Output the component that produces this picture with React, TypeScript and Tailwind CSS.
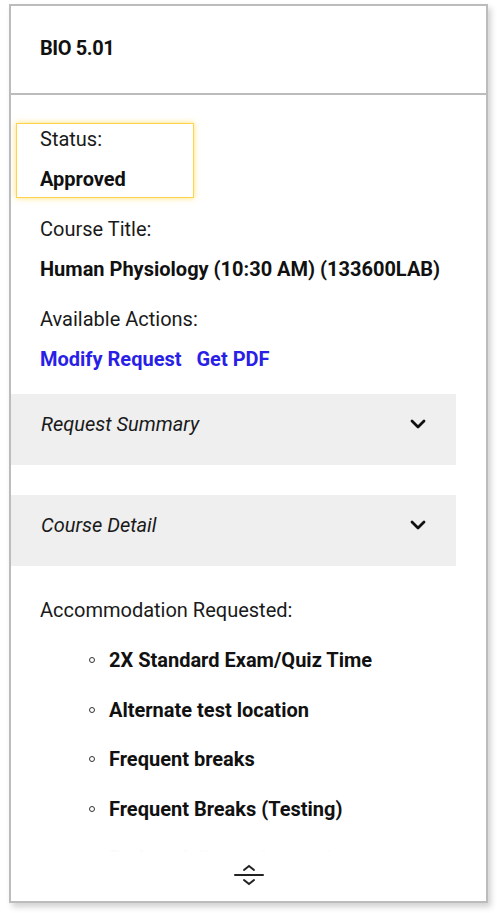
import { ChevronDown } from "lucide-react";

const accommodations = [
  "2X Standard Exam/Quiz Time",
  "Alternate test location",
  "Frequent breaks",
  "Frequent Breaks (Testing)",
  "Reduced distraction environment",
];

function Label({ children }: { children: React.ReactNode }) {
  return <div className="text-[20px] leading-[20px] text-[#1a1a1a]">{children}</div>;
}

function Value({ children }: { children: React.ReactNode }) {
  return <div className="text-[20px] leading-[20px] font-bold text-[#111]">{children}</div>;
}

function Collapsible({ title }: { title: string }) {
  return (
    <div className="mr-[30px] h-[71px] bg-[#efefef] flex items-center justify-between pl-[30px] pr-[26px] pb-[12px]">
      <span className="italic text-[20px] text-[#1a1a1a]">{title}</span>
      <ChevronDown size={24} strokeWidth={2.8} className="text-[#111]" />
    </div>
  );
}

function ExpandIcon() {
  return (
    <svg width="30" height="24" viewBox="0 0 30 24" fill="none" stroke="#222" strokeWidth="2" strokeLinecap="round">
      <path d="M10 7 L15 3 L20 7" />
      <path d="M1 12 L29 12" />
      <path d="M10 17 L15 21 L20 17" />
    </svg>
  );
}

export default function App() {
  return (
    <div className="w-[500px] h-[913px] bg-white pt-[4px] pl-[9px]" style={{ fontFamily: "Roboto, 'Liberation Sans', sans-serif" }}>
      <div className="w-[479px] h-[899px] border-2 border-[#bcbcbc] bg-white flex flex-col shadow-[3px_4px_6px_rgba(0,0,0,0.18)]">
        {/* Header */}
        <div className="h-[89px] border-b-2 border-[#bcbcbc] flex items-center pl-[29px] pb-[3px]">
          <span className="text-[20px] font-bold tracking-[-0.4px] text-[#111]">BIO 5.01</span>
        </div>

        {/* Body */}
        <div className="relative flex-1 overflow-hidden">
          <div className="pt-[28px]">
            <div className="ml-[5px] w-[178px] h-[75px] border-[1.5px] border-[#ffd44a] shadow-[0_0_6px_rgba(255,214,60,0.7)] pl-[23px] pt-[5px] flex flex-col gap-[20px]">
              <Label>Status:</Label>
              <Value>Approved</Value>
            </div>

            <div className="pl-[29px] pt-[21px] flex flex-col gap-[20px]">
              <Label>Course Title:</Label>
              <Value>Human Physiology (10:30 AM) (133600LAB)</Value>
              <div className="pt-[10px]">
                <Label>Available Actions:</Label>
              </div>
              <div className="flex gap-[15px] text-[20px] leading-[20px] font-bold text-[#2a1fe6]">
                <a>Modify Request</a>
                <a>Get PDF</a>
              </div>
            </div>

            <div className="pt-[25px] flex flex-col gap-[30px]">
              <Collapsible title="Request Summary" />
              <Collapsible title="Course Detail" />
            </div>

            <div className="pl-[29px] pt-[34px]">
              <Label>Accommodation Requested:</Label>
              <ul className="mt-[30px] flex flex-col gap-[29.5px]">
                {accommodations.map((a) => (
                  <li key={a} className="flex items-center pl-[49px] text-[20px] leading-[20px] font-bold text-[#111]">
                    <span className="w-[6px] h-[6px] rounded-full border-[1.5px] border-[#333] mr-[14px]" />
                    {a}
                  </li>
                ))}
              </ul>
            </div>
          </div>

          {/* Fade + expand */}
          <div className="absolute left-0 right-0 bottom-0 h-[75px] bg-[linear-gradient(to_bottom,rgba(255,255,255,0)_0%,rgba(255,255,255,0.9)_25%,#fff_35%)] flex items-end justify-center pb-[14px]">
            <ExpandIcon />
          </div>
        </div>
      </div>
    </div>
  );
}
